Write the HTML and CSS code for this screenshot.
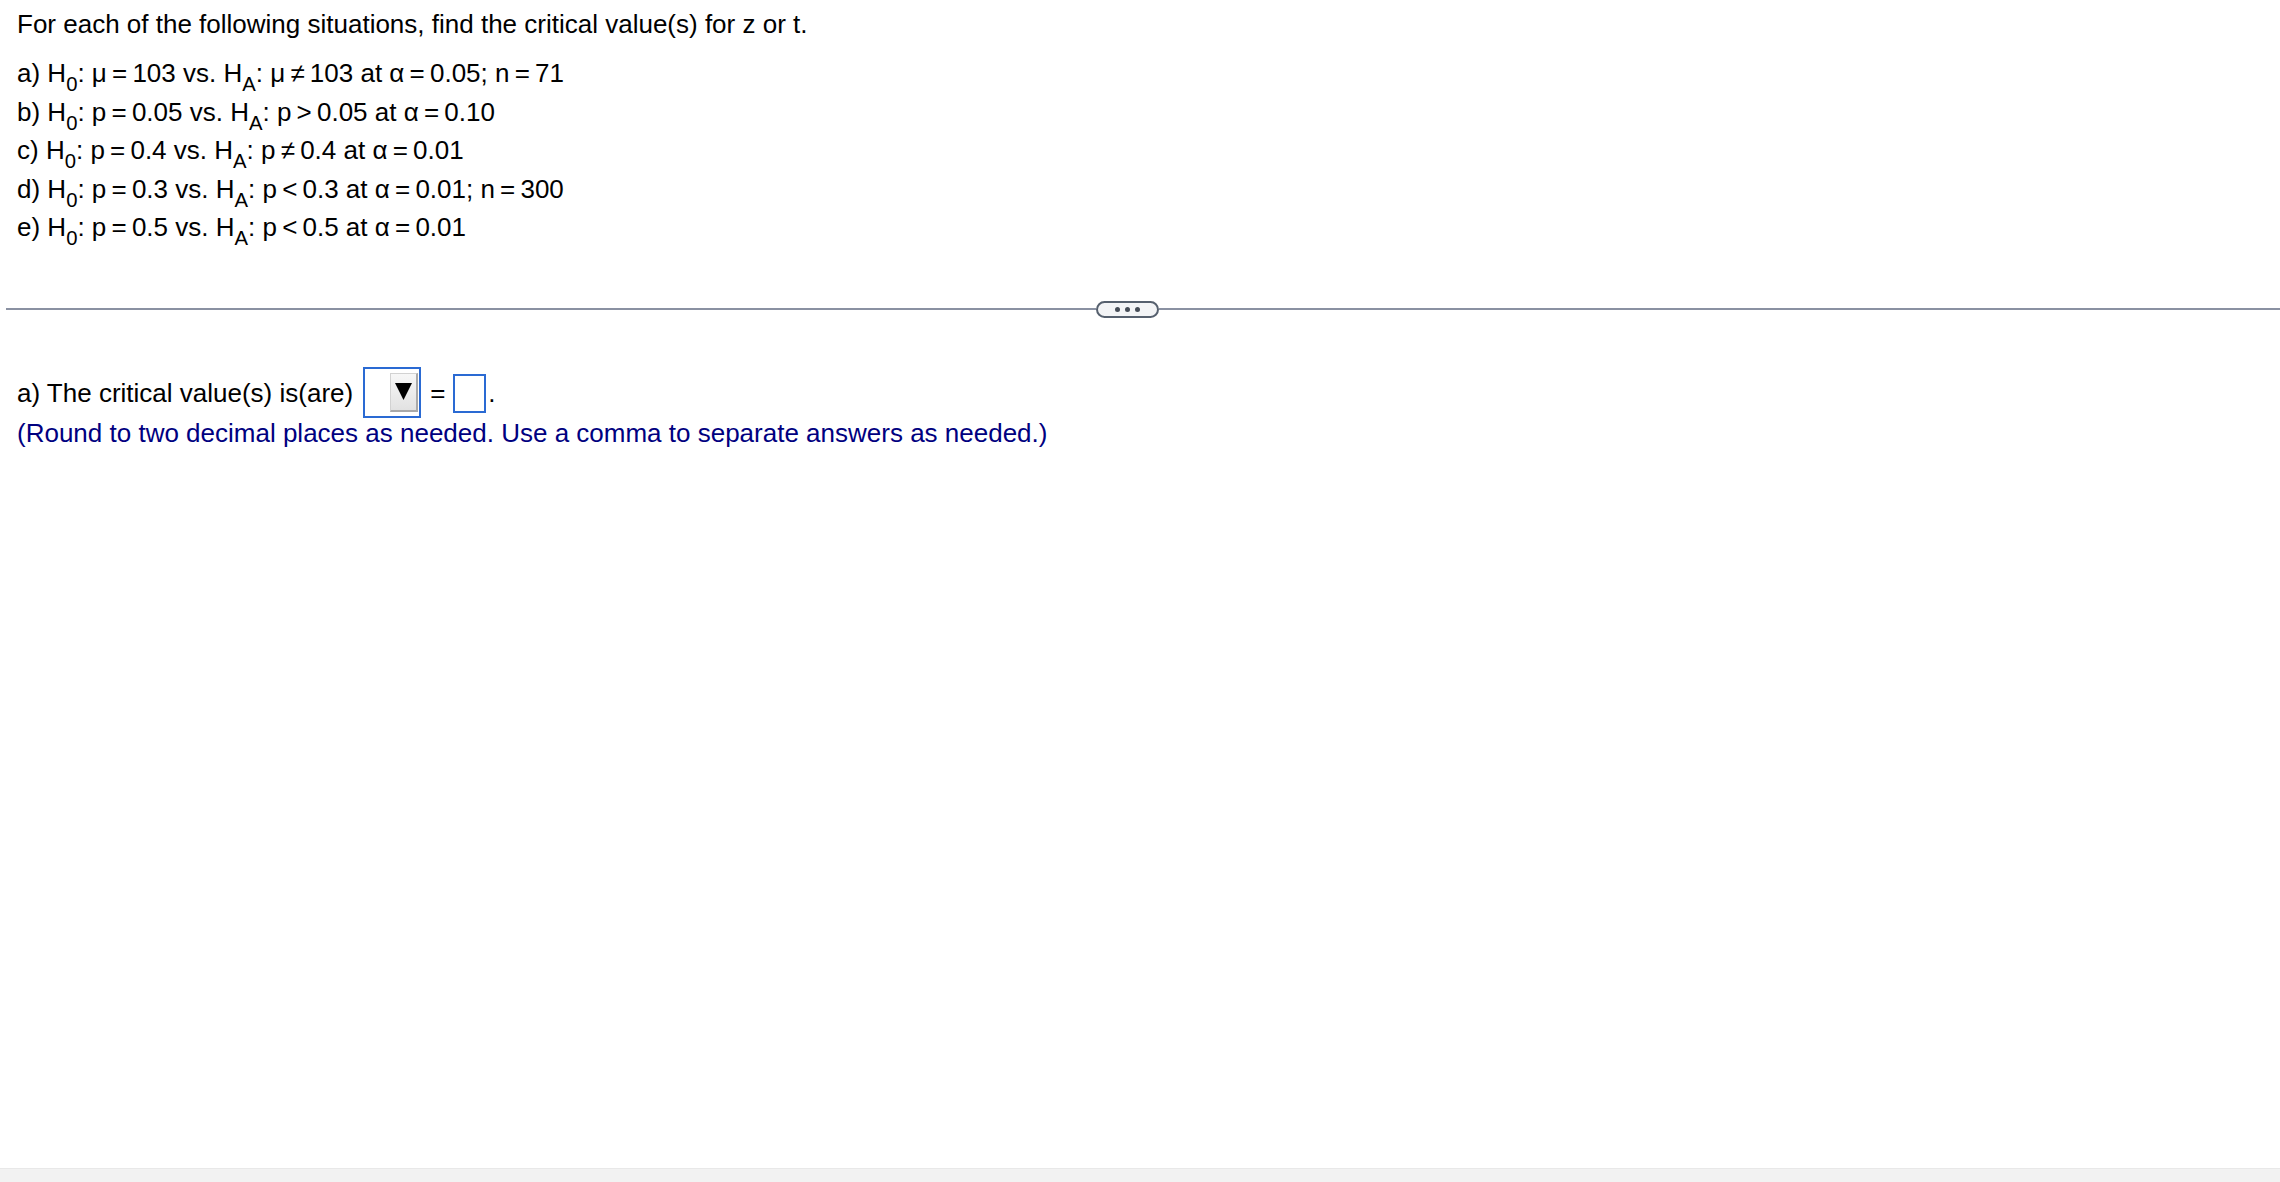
FILE: index.html
```html
<!DOCTYPE html>
<html lang="en">
<head>
    <meta charset="UTF-8">
    <meta name="viewport" content="width=device-width, initial-scale=1.0">
    <title>Critical values</title>
    <link rel="stylesheet" href="styles.css">
</head>
<body>
    <main class="page">
        <div class="question">
            <p class="prompt">For each of the following situations, find the critical value(s) for z or t.</p>
            <div class="cases">
                <div class="case">a) H<sub>0</sub>: μ<span class="op">=</span>103 vs. H<sub>A</sub>: μ<span class="op">≠</span>103 at α<span class="op">=</span>0.05; n<span class="op">=</span>71</div>
                <div class="case">b) H<sub>0</sub>: p<span class="op">=</span>0.05 vs. H<sub>A</sub>: p<span class="op">&gt;</span>0.05 at α<span class="op">=</span>0.10</div>
                <div class="case">c) H<sub>0</sub>: p<span class="op">=</span>0.4 vs. H<sub>A</sub>: p<span class="op">≠</span>0.4 at α<span class="op">=</span>0.01</div>
                <div class="case">d) H<sub>0</sub>: p<span class="op">=</span>0.3 vs. H<sub>A</sub>: p<span class="op">&lt;</span>0.3 at α<span class="op">=</span>0.01; n<span class="op">=</span>300</div>
                <div class="case">e) H<sub>0</sub>: p<span class="op">=</span>0.5 vs. H<sub>A</sub>: p<span class="op">&lt;</span>0.5 at α<span class="op">=</span>0.01</div>
            </div>
        </div>

        <div class="divider">
            <span class="rule rule-left"></span>
            <button class="more" type="button" aria-label="Show more">
                <span class="dot"></span><span class="dot"></span><span class="dot"></span>
            </button>
            <span class="rule rule-right"></span>
        </div>

        <div class="answer">
            <div class="answer-line">a) The critical value(s) is(are)<span class="dropdown"><span class="drop-btn"><svg width="17" height="17" viewBox="0 0 17 17"><polygon points="0,0 17,0 8.5,17" fill="#000"/></svg></span></span><span class="eq">=</span><span class="input-box"></span><span class="period">.</span></div>
            <p class="note">(Round to two decimal places as needed. Use a comma to separate answers as needed.)</p>
        </div>
    </main>
    <footer class="footer"></footer>
</body>
</html>
```

FILE: styles.css
```css
html, body {
    margin: 0;
    height: 100%;
}
body {
    display: flex;
    flex-direction: column;
    background-color: #ffffff;
    color: #000000;
    font-family: "Liberation Sans", Arial, sans-serif;
    font-size: 26px;
}
.page {
    flex: 1;
}
.question {
    padding: 9px 0 0 17px;
}
.prompt {
    margin: 0;
    line-height: 30px;
}
.cases {
    margin-top: 15px;
}
.case {
    line-height: 38.5px;
}
.op {
    margin: 0 0.2em;
}
sub {
    font-size: 0.78em;
    line-height: 0;
    vertical-align: -0.45em;
}
.divider {
    display: flex;
    align-items: center;
    margin: 54px 0 0 6px;
    height: 17px;
}
.rule {
    height: 2px;
    background-color: #8a91a2;
}
.rule-left {
    width: 1090px;
}
.rule-right {
    flex: 1;
}
.more {
    display: flex;
    align-items: center;
    justify-content: center;
    gap: 5px;
    width: 63px;
    height: 17px;
    box-sizing: border-box;
    padding: 0;
    border: 2px solid #56606e;
    border-radius: 9px;
    background-color: #f3f4f6;
}
.dot {
    width: 5px;
    height: 5px;
    border-radius: 50%;
    background-color: #454c57;
}
.answer {
    margin-top: 49px;
    padding-left: 17px;
}
.answer-line {
    line-height: 41px;
}
.dropdown {
    display: inline-block;
    overflow: hidden;
    box-sizing: border-box;
    width: 58px;
    height: 51px;
    margin-left: 10px;
    padding: 4px 1px 0 0;
    border: 2px solid #2a6ad3;
    vertical-align: -16px;
}
.drop-btn {
    display: flex;
    align-items: center;
    justify-content: center;
    box-sizing: border-box;
    width: 28px;
    height: 39px;
    margin-left: auto;
    border: 1px solid #d2d2d2;
    border-right: 2px solid #a9a9a9;
    border-bottom: 2px solid #a9a9a9;
    background: linear-gradient(#f7f7f7, #e2e2e2);
}
.drop-btn svg {
    display: block;
}
.eq {
    margin: 0 8px 0 9px;
}
.input-box {
    display: inline-block;
    box-sizing: border-box;
    width: 33px;
    height: 39px;
    border: 2px solid #2a6ad3;
    vertical-align: -11px;
}
.period {
    margin-left: 2px;
}
.note {
    margin: 0;
    line-height: 31px;
    color: #000080;
}
.footer {
    height: 13px;
    background-color: #f2f2f2;
    border-top: 1px solid #e8e8e8;
}
```
